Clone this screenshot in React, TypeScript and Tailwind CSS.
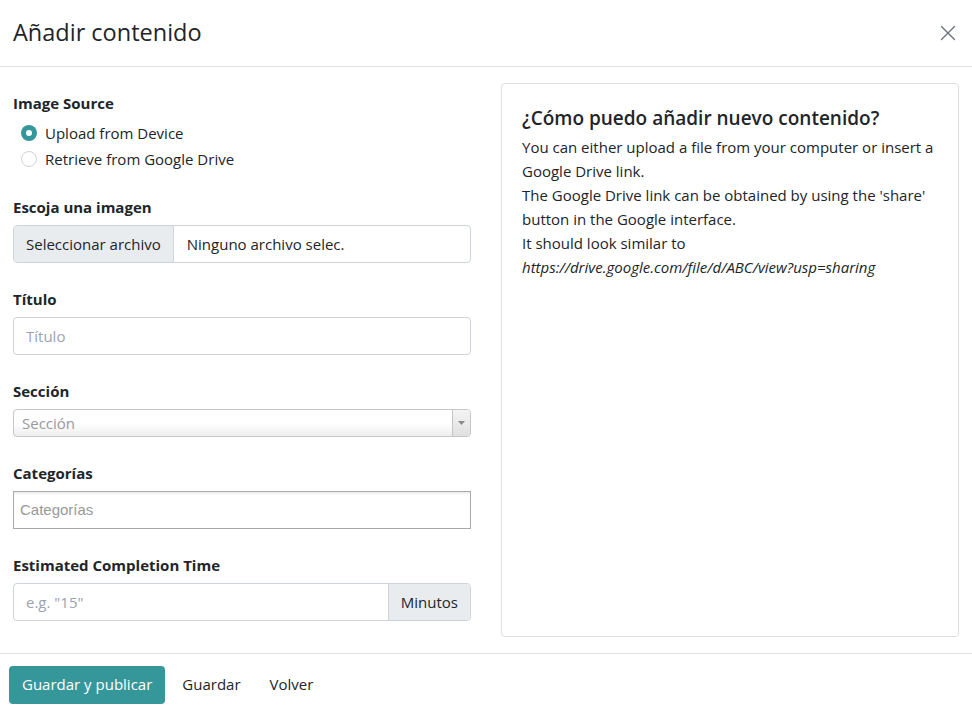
import { X } from 'lucide-react'

const font = { fontFamily: '"Open Sans", "Noto Sans", sans-serif' }

function Label({ children }: { children: React.ReactNode }) {
  return <div className="text-[15px] font-bold text-[#212529] mb-[7px] leading-[22px]">{children}</div>
}

export default function App() {
  return (
    <div style={font} className="w-[972px] h-[713px] bg-white text-[#212529] flex flex-col">
      <div className="h-[67px] border-b border-[#dee2e6] flex items-center justify-between pl-[13px] pr-[11px]">
        <h1 className="text-[23.5px] text-[#212529]">Añadir contenido</h1>
        <X className="w-[26px] h-[26px] text-[#6c757d]" strokeWidth={1.3} />
      </div>

      <div className="flex-1 flex gap-[30px] px-[13px] pt-[16px] pb-[16px]">
        <div className="w-[458px] flex flex-col pt-[9px]">
          <div className="text-[15px] font-bold leading-[22px] mb-[6px]">Image Source</div>
          <div className="flex flex-col pl-[8px] text-[15px] leading-[26px]">
            <label className="flex items-center gap-[8px]">
              <span className="w-[16px] h-[16px] rounded-full bg-[#36979a] flex items-center justify-center">
                <span className="w-[6px] h-[6px] rounded-full bg-white" />
              </span>
              Upload from Device
            </label>
            <label className="flex items-center gap-[8px]">
              <span className="w-[16px] h-[16px] rounded-full border border-[#ced4da] bg-white" />
              Retrieve from Google Drive
            </label>
          </div>

          <div className="mt-[24px]">
            <Label>Escoja una imagen</Label>
            <div className="h-[38px] flex border border-[#ced4da] rounded-[4px] overflow-hidden text-[15px]">
              <div className="bg-[#e9ecef] border-r border-[#ced4da] px-[12px] flex items-center">Seleccionar archivo</div>
              <div className="px-[13px] flex items-center">Ninguno archivo selec.</div>
            </div>
          </div>

          <div className="mt-[25px]">
            <Label>Título</Label>
            <div className="h-[38px] flex items-center border border-[#ced4da] rounded-[4px] px-[12px] text-[15px] text-[#9ca3af]">Título</div>
          </div>

          <div className="mt-[25px]">
            <Label>Sección</Label>
            <div className="h-[28px] flex border border-[#c6c6c6] rounded-[4px] overflow-hidden text-[15px] bg-gradient-to-b from-white from-50% to-[#eeeeee]">
              <div className="flex-1 flex items-center px-[8px] text-[#999]">Sección</div>
              <div className="w-[18px] border-l border-[#c6c6c6] flex items-center justify-center bg-gradient-to-b from-[#f4f4f4] to-[#e0e0e0]">
                <svg width="7" height="4" viewBox="0 0 7 4"><path d="M0 0h7L3.5 4z" fill="#888" /></svg>
              </div>
            </div>
          </div>

          <div className="mt-[25px]">
            <Label>Categorías</Label>
            <div className="h-[38px] flex items-center border border-[#aaaaaa] px-[6px] text-[15px] text-[#999] shadow-[inset_0_3px_3px_-2px_rgba(0,0,0,0.12)]" style={{ fontFamily: '"Liberation Sans", Arial, sans-serif' }}>Categorías</div>
          </div>

          <div className="mt-[25px]">
            <Label>Estimated Completion Time</Label>
            <div className="h-[38px] flex border border-[#ced4da] rounded-[4px] overflow-hidden text-[15px]">
              <div className="flex-1 flex items-center px-[12px] text-[#9ca3af]">e.g. "15"</div>
              <div className="bg-[#e9ecef] border-l border-[#ced4da] px-[12px] flex items-center">Minutos</div>
            </div>
          </div>
        </div>

        <div className="w-[458px] border border-[#dfdfdf] rounded-[4px] px-[20px] pt-[20px]">
          <h2 className="text-[19px] font-semibold leading-[28px] mb-[3px]">¿Cómo puedo añadir nuevo contenido?</h2>
          <p className="text-[15px] leading-[24px]">
            You can either upload a file from your computer or insert a Google Drive link.
            <br />
            The Google Drive link can be obtained by using the 'share' button in the Google interface.
            <br />
            It should look similar to
            <br />
            <i>https://drive.google.com/file/d/ABC/view?usp=sharing</i>
          </p>
        </div>
      </div>

      <div className="h-[60px] border-t border-[#dee2e6] flex items-center pt-[2px] px-[9px] text-[15px]">
        <button className="h-[38px] px-[13px] rounded-[4px] bg-[#36979a] text-white">Guardar y publicar</button>
        <button className="h-[38px] px-[17px]">Guardar</button>
        <button className="h-[38px] px-[12px]">Volver</button>
      </div>
    </div>
  )
}
